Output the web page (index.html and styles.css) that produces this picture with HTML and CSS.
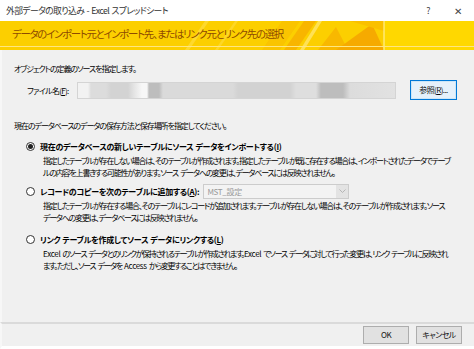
FILE: index.html
```html
<!DOCTYPE html>
<html lang="ja">
<head>
<meta charset="utf-8">
<title>外部データの取り込み - Excel スプレッドシート</title>
<link rel="stylesheet" href="styles.css">
</head>
<body>
<div class="dialog">
  <header class="titlebar">
    <span class="title">外部データの取り込み - Excel スプレッドシート</span>
    <span class="tb-btn">?</span>
    <span class="tb-btn close">✕</span>
  </header>
  <div class="banner">
    <svg class="banner-art" viewBox="0 0 474 29" preserveAspectRatio="none" aria-hidden="true">
      <rect x="0" y="0" width="474" height="29" fill="#FCCF00"/>
      <rect x="384" y="0" width="90" height="29" fill="#FFD800"/>
      <polygon points="185,29 205,0 209,0 189,29" fill="#FFE04A" opacity="0.6"/>
      <polygon points="215,29 235,0 238,0 218,29" fill="#FFE04A" opacity="0.5"/>
      <polygon points="262,29 282,0 300,0 280,29" fill="#F9C000" opacity="0.8"/>
      <polygon points="284,29 304,0 316,0 296,29" fill="#F6AE00" opacity="0.8"/>
      <polygon points="300,29 318,0 322,0 304,29" fill="#FFE56A" opacity="0.8"/>
      <polygon points="318,29 336,6 348,29" fill="#F8B800"/>
      <polygon points="336,29 372,3 384,29" fill="#F6AA00"/>
      <polygon points="350,0 384,0 384,10" fill="#FAC000"/>
      <rect x="383.5" y="0" width="1" height="29" fill="#FFF3B0"/>
      <rect x="0" y="25" width="474" height="1" fill="#FFE680"/>
    </svg>
    <h1 class="banner-text">データのインポート元とインポート先、またはリンク元とリンク先の選択</h1>
  </div>
  <main class="content">
    <p class="lead">オブジェクトの定義のソースを指定します。</p>
    <div class="file-row">
      <span class="file-label">ファイル名(<u>F</u>):</span>
      <div class="file-input"></div>
      <button class="btn browse">参照(<u>R</u>)...</button>
    </div>
    <p class="lead second">現在のデータベースのデータの保存方法と保存場所を指定してください。</p>

    <div class="option first">
      <span class="radio checked"></span>
      <span class="opt-label">現在のデータベースの新しいテーブルにソース データをインポートする(<u>I</u>)</span>
    </div>
    <p class="desc">指定したテーブルが存在しない場合は、そのテーブルが作成されます。指定したテーブルが既に存在する場合は、インポートされたデータでテーブ<br>ルの内容を上書きする可能性があります。ソース データへの変更は、データベースには反映されません。</p>

    <div class="option">
      <span class="radio"></span>
      <span class="opt-label">レコードのコピーを次のテーブルに追加する(<u>A</u>):</span>
      <div class="combo"><span class="combo-text">MST_設定</span><span class="combo-btn"><svg width="7" height="4" viewBox="0 0 7 4"><path d="M0.5 0.5 L3.5 3.5 L6.5 0.5" fill="none" stroke="#B5B5B5" stroke-width="1"/></svg></span></div>
    </div>
    <p class="desc">指定したテーブルが存在する場合、そのテーブルにレコードが追加されます。テーブルが存在しない場合は、そのテーブルが作成されます。ソース<br>データへの変更は、データベースには反映されません。</p>

    <div class="option last">
      <span class="radio"></span>
      <span class="opt-label">リンク テーブルを作成してソース データにリンクする(<u>L</u>)</span>
    </div>
    <p class="desc tight"><span class="latin">Excel</span> のソース データとのリンクが保持されるテーブルが作成されます。<span class="latin">Excel</span> でソース データに対して行った変更は、リンク テーブルに反映され<br>ます。ただし、ソース データを <span class="latin">Access</span> から変更することはできません。</p>
  </main>
  <footer class="footer">
    <button class="btn">OK</button>
    <button class="btn">キャンセル</button>
  </footer>
</div>
</body>
</html>
```

FILE: styles.css
```css
* { box-sizing: border-box; }
html, body { margin: 0; padding: 0; }
body {
  width: 474px;
  height: 349px;
  overflow: hidden;
  background: #ffffff;
  font-family: "Noto Sans CJK JP", "Noto Sans", sans-serif;
  color: #111;
  font-feature-settings: "palt" 1;
}
.dialog {
  display: flex;
  flex-direction: column;
  height: 349px;
}
.titlebar {
  height: 21px;
  flex: none;
  display: flex;
  align-items: center;
  padding-left: 6px;
  padding-right: 2px;
  font-size: 8.8px;
  color: #333;
  background: #fff;
}
.title { flex: 1; letter-spacing: -0.6px; word-spacing: 1px; }
.tb-btn { width: 29px; text-align: center; font-size: 9px; color: #444; }
.tb-btn.close { font-size: 10px; }

.banner {
  position: relative;
  flex: none;
  height: 29px;
  display: flex;
  align-items: center;
  padding-left: 12px;
  padding-bottom: 4px;
}
.banner-art {
  position: absolute;
  left: 0; top: 0;
  width: 474px; height: 29px;
}
.banner-text {
  position: relative;
  margin: 0;
  font-size: 10.4px;
  letter-spacing: -1.25px;
  font-weight: normal;
  color: #8E4A00;
  white-space: nowrap;
}

.content {
  flex: 1;
  background: #F0F0F0;
  padding: 13px 0 0 0;
  border-left: 2px solid #F7F7F7;
  font-size: 8px;
  letter-spacing: -1.2px;
  word-spacing: 1.6px;
  color: #000;
}
p { margin: 0; }
.lead { line-height: 12px; padding-left: 12px; white-space: nowrap; letter-spacing: -1.05px; }
.lead.second { margin-top: 20px; }

.file-row {
  display: flex;
  align-items: center;
  margin-top: 5px;
  height: 20px;
  padding-left: 25px;
}
.file-label { width: 50px; flex: none; letter-spacing: -0.7px; }
.file-input {
  width: 319px;
  height: 17px;
  border: 1px solid #D4D4D4;
  background:
    linear-gradient(90deg,
      #f2f2f2 0px, #f2f2f2 10px,
      #dcdcdc 13px, #dcdcdc 28px,
      #d3d3d3 33px, #d3d3d3 50px,
      #e4e4e4 56px, #f7f7f7 64px, #f7f7f7 69px,
      #bdbdbd 71px, #bdbdbd 81px,
      #dadada 85px, #dadada 155px,
      #d2d2d2 160px, #d2d2d2 212px,
      #dedede 218px, #dedede 238px,
      #bdbdbd 243px, #bdbdbd 265px,
      #dcdcdc 272px, #e2e2e2 318px);
}
.btn {
  font-family: inherit;
  font-size: 8px;
  letter-spacing: -0.6px;
  font-feature-settings: "palt" 1;
  color: #111;
  background: #E1E1E1;
  border: 1px solid #ADADAD;
  padding: 0;
  height: 18px;
  width: 46px;
  line-height: 16px;
}
.browse {
  margin-left: 14px;
  width: 47px;
  height: 20px;
  background: #E5F1FB;
  border: 1px solid #0078D7;
  box-shadow: inset 0 0 0 1px #CDE6F7;
}

.option {
  display: flex;
  align-items: center;
  padding-left: 24px;
  height: 12px;
  margin-top: 6px;
  font-weight: bold;
  letter-spacing: -0.3px;
  word-spacing: 0.5px;
}
.option.first { margin-top: 8px; }
.option.last { margin-top: 9px; }
.radio {
  width: 9px;
  height: 9px;
  flex: none;
  border-radius: 50%;
  border: 1px solid #333;
  background: #fff;
  margin-right: 5px;
  display: flex;
  align-items: center;
  justify-content: center;
}
.radio.checked::after {
  content: "";
  width: 5px;
  height: 5px;
  border-radius: 50%;
  background: #222;
}
.opt-label { white-space: nowrap; }
.combo {
  margin-left: 4px;
  width: 146px;
  height: 15px;
  border: 1px solid #CCCCCC;
  background: #F3F3F3;
  display: flex;
  align-items: center;
  justify-content: space-between;
  font-weight: normal;
  letter-spacing: -0.3px;
}
.combo-text { color: #9A9A9A; padding-left: 3px; }
.combo-btn {
  width: 12px;
  height: 13px;
  background: #E3E3E3;
  display: flex;
  align-items: center;
  justify-content: center;
}
.desc {
  padding-left: 41px;
  margin-top: 3px;
  line-height: 12px;
  margin-bottom: 4px;
  white-space: nowrap;
}
.desc.tight { letter-spacing: -1.32px; }
.latin { letter-spacing: -0.3px; }

.footer {
  flex: none;
  height: 27px;
  background: #F0F0F0;
  border-top: 2px solid #DADADA;
  border-left: 2px solid #F7F7F7;
  border-bottom: 3px solid #ffffff;
  display: flex;
  justify-content: flex-end;
  align-items: center;
  gap: 7px;
  padding-right: 12px;
}
```
